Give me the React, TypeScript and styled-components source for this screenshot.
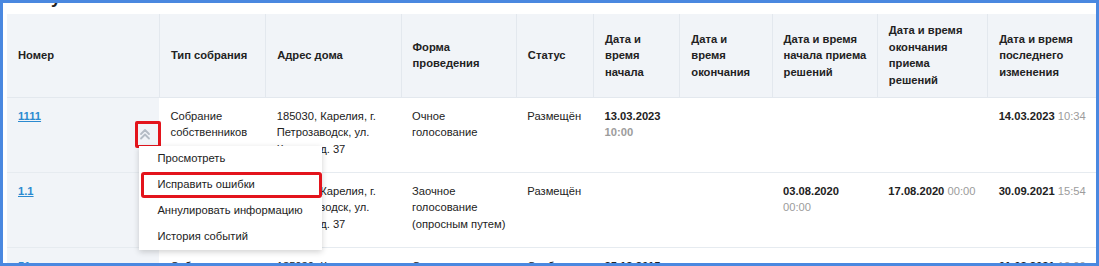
import styled, { createGlobalStyle } from "styled-components";

const GlobalStyle = createGlobalStyle`
  html, body {
    margin: 0;
    padding: 0;
    background: #ffffff;
  }
  body {
    font-family: "Liberation Sans", Arial, sans-serif;
    font-size: 11.2px;
    color: #222222;
  }
`;

interface Column {
  title: string;
  width: number;
}

const columns: Column[] = [
  { title: "Номер", width: 152 },
  { title: "Тип собрания", width: 106 },
  { title: "Адрес дома", width: 135 },
  { title: "Форма проведения", width: 115 },
  { title: "Статус", width: 77 },
  { title: "Дата и время начала", width: 86 },
  { title: "Дата и время окончания", width: 92 },
  { title: "Дата и время начала приема решений", width: 105 },
  { title: "Дата и время окончания приема решений", width: 110 },
  { title: "Дата и время последнего изменения", width: 109 },
];

const menuItems = [
  { label: "Просмотреть", marked: false },
  { label: "Исправить ошибки", marked: true },
  { label: "Аннулировать информацию", marked: false },
  { label: "История событий", marked: false },
];

const address = "185030, Карелия, г. Петрозаводск, ул. Кирова, д. 37";

export default function App() {
  return (
    <>
      <GlobalStyle />
      <Frame>
        <TitleBar>
          <Title>Результаты поиска</Title>
        </TitleBar>
        <Table>
          <colgroup>
            {columns.map((c) => (
              <col key={c.title} style={{ width: c.width }} />
            ))}
          </colgroup>
          <thead>
            <tr>
              {columns.map((c) => (
                <HeadCell key={c.title}>{c.title}</HeadCell>
              ))}
            </tr>
          </thead>
          <tbody>
            <Row>
              <NumberCell>
                <NumberInner>
                  <Link href="#">1111</Link>
                  <ToggleAnchor>
                    <ToggleBox>
                      <ChevronsUp />
                    </ToggleBox>
                    <Menu>
                      {menuItems.map((item) => (
                        <MenuItem key={item.label} $marked={item.marked}>
                          {item.label}
                        </MenuItem>
                      ))}
                    </Menu>
                  </ToggleAnchor>
                </NumberInner>
              </NumberCell>
              <Cell>Собрание собственников</Cell>
              <Cell>{address}</Cell>
              <Cell>Очное голосование</Cell>
              <Cell>Размещён</Cell>
              <Cell>
                <DateText>13.03.2023</DateText>
                <br />
                <TimeText $bold>10:00</TimeText>
              </Cell>
              <Cell />
              <Cell />
              <Cell />
              <Cell>
                <Stamp>
                  <DateText>14.03.2023</DateText> <TimeText>10:34</TimeText>
                </Stamp>
              </Cell>
            </Row>
            <Row>
              <NumberCell>
                <Link href="#">1.1</Link>
              </NumberCell>
              <Cell>Собрание собственников</Cell>
              <Cell>{address}</Cell>
              <Cell>Заочное голосование (опросным путем)</Cell>
              <Cell>Размещён</Cell>
              <Cell />
              <Cell />
              <Cell>
                <DateText>03.08.2020</DateText>
                <br />
                <TimeText>00:00</TimeText>
              </Cell>
              <Cell>
                <Stamp>
                  <DateText>17.08.2020</DateText> <TimeText>00:00</TimeText>
                </Stamp>
              </Cell>
              <Cell>
                <Stamp>
                  <DateText>30.09.2021</DateText> <TimeText>15:54</TimeText>
                </Stamp>
              </Cell>
            </Row>
            <Row>
              <NumberCell>
                <Link href="#">51</Link>
              </NumberCell>
              <Cell>Собрание собственников</Cell>
              <Cell>{address}</Cell>
              <Cell>Очное голосование</Cell>
              <Cell>Опубликован</Cell>
              <Cell>
                <DateText>25.12.2015</DateText>
              </Cell>
              <Cell />
              <Cell />
              <Cell />
              <Cell>
                <Stamp>
                  <DateText>01.03.2021</DateText> <TimeText>12:00</TimeText>
                </Stamp>
              </Cell>
            </Row>
          </tbody>
        </Table>
      </Frame>
    </>
  );
}

function ChevronsUp() {
  return (
    <svg width="12" height="12" viewBox="0 0 12 12" fill="none">
      <polyline
        points="2,6 6,2 10,6"
        stroke="#b4bcc5"
        strokeWidth="1.8"
        strokeLinecap="round"
        strokeLinejoin="round"
      />
      <polyline
        points="2,10.5 6,6.5 10,10.5"
        stroke="#b4bcc5"
        strokeWidth="1.8"
        strokeLinecap="round"
        strokeLinejoin="round"
      />
    </svg>
  );
}

const Frame = styled.div`
  box-sizing: border-box;
  width: 1099px;
  height: 266px;
  border: 3px solid #4a88e0;
  padding: 0 0 0 4px;
  overflow: hidden;
  background: #ffffff;
`;

const TitleBar = styled.div`
  height: 11px;
  overflow: hidden;
  padding-left: 14px;
`;

const Title = styled.h2`
  margin: -17px 0 0;
  font-size: 18px;
  line-height: 22px;
  font-weight: bold;
  color: #222222;
`;

const Table = styled.table`
  border-collapse: collapse;
  table-layout: fixed;
  width: 1090px;
`;

const HeadCell = styled.th`
  height: 83px;
  box-sizing: border-box;
  padding: 0 8px 0 11px;
  background: #f1f4f8;
  border-right: 1px solid #e3e8ee;
  border-bottom: 1px solid #e3e8ee;
  text-align: left;
  vertical-align: middle;
  font-weight: bold;
  font-size: 11.2px;
  line-height: 16.5px;
  color: #222222;

  &:last-child {
    border-right: none;
  }
`;

const Row = styled.tr`
  height: 75px;
`;

const Cell = styled.td`
  box-sizing: border-box;
  padding: 10px 6px 8px 11px;
  vertical-align: top;
  border-bottom: 1px solid #e6ebf0;
  font-size: 11.2px;
  line-height: 16.5px;
  color: #222222;
`;

const NumberCell = styled(Cell)`
  background: #f1f4f8;
  padding-right: 0;
`;

const NumberInner = styled.div`
  display: flex;
  justify-content: space-between;
  align-items: flex-start;
`;

const Link = styled.a`
  color: #2b8ad0;
  font-weight: bold;
  text-decoration: underline;
`;

const ToggleAnchor = styled.div`
  position: relative;
  margin-top: 13px;
  margin-right: -2px;
`;

const ToggleBox = styled.div`
  box-sizing: border-box;
  width: 26px;
  height: 27px;
  border: 3px solid #e3141c;
  border-radius: 2px;
  display: flex;
  align-items: flex-end;
  padding: 0 0 5px 1px;
`;

const Menu = styled.div`
  position: absolute;
  left: 4px;
  top: 25px;
  width: 183px;
  background: #ffffff;
  box-shadow: 0 2px 6px rgba(0, 0, 0, 0.18);
  z-index: 10;
`;

const MenuItem = styled.div<{ $marked?: boolean }>`
  box-sizing: border-box;
  height: 26px;
  display: flex;
  align-items: center;
  padding-left: 18px;
  font-size: 11.2px;
  color: #222222;
  white-space: nowrap;
  border-radius: 3px;
  ${(p) =>
    p.$marked
      ? `
    margin-left: 2px;
    padding-left: 16px;
    box-shadow: inset 0 0 0 3px #e3141c;
  `
      : ""}
`;

const Stamp = styled.span`
  white-space: nowrap;
`;

const DateText = styled.span`
  font-weight: bold;
  color: #222222;
`;

const TimeText = styled.span<{ $bold?: boolean }>`
  color: #9c9c9c;
  font-weight: ${(p) => (p.$bold ? "bold" : "normal")};
`;
